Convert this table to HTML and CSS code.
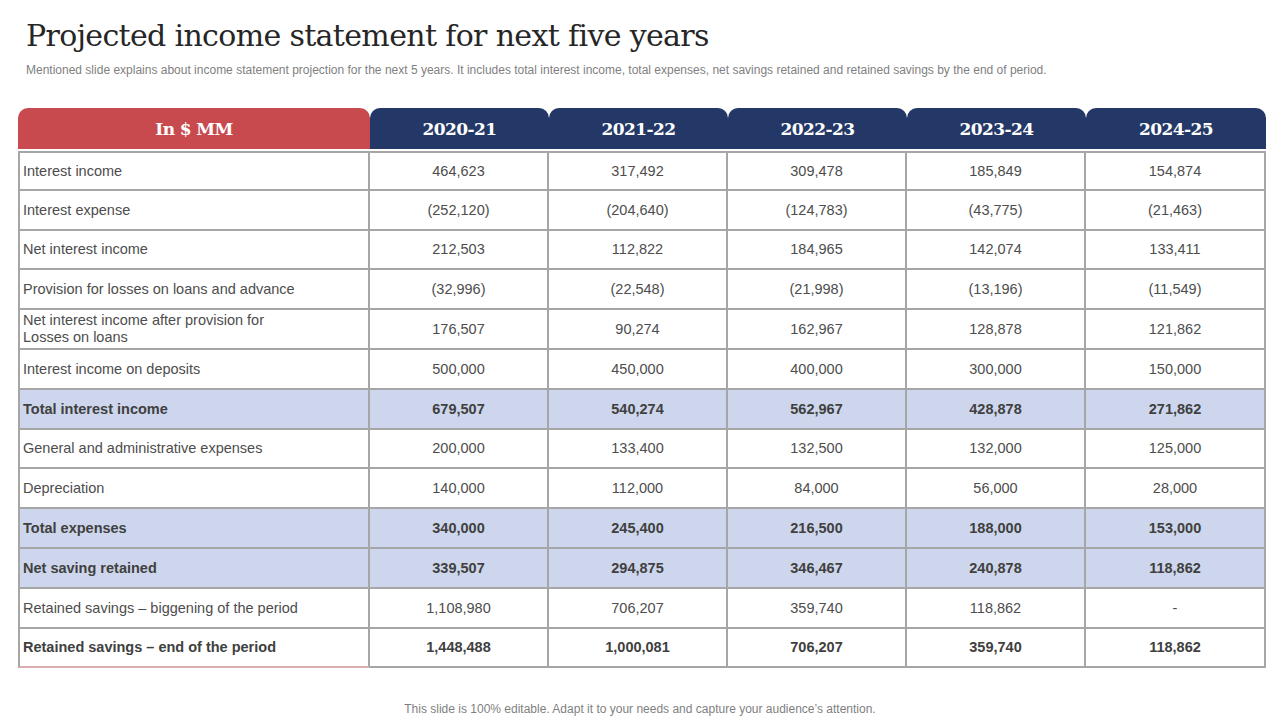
FILE: index.html
```html
<!DOCTYPE html>
<html>
<head>
<meta charset="utf-8">
<link rel="stylesheet" href="styles.css">
</head>
<body>
<div class="slide">
  <h1 class="title">Projected income statement for next five years</h1>
  <p class="subtitle">Mentioned slide explains about income statement projection for the next 5 years. It includes total interest income, total expenses, net savings retained and retained savings by the end of period.</p>
  <div class="table">
    <div class="hd hd-red">In $ MM</div>
    <div class="hd">2020-21</div>
    <div class="hd">2021-22</div>
    <div class="hd">2022-23</div>
    <div class="hd">2023-24</div>
    <div class="hd">2024-25</div>

    <div class="c lbl">Interest income</div><div class="c">464,623</div><div class="c">317,492</div><div class="c">309,478</div><div class="c">185,849</div><div class="c">154,874</div>
    <div class="c lbl">Interest expense</div><div class="c">(252,120)</div><div class="c">(204,640)</div><div class="c">(124,783)</div><div class="c">(43,775)</div><div class="c">(21,463)</div>
    <div class="c lbl">Net interest income</div><div class="c">212,503</div><div class="c">112,822</div><div class="c">184,965</div><div class="c">142,074</div><div class="c">133,411</div>
    <div class="c lbl">Provision for losses on loans and advance</div><div class="c">(32,996)</div><div class="c">(22,548)</div><div class="c">(21,998)</div><div class="c">(13,196)</div><div class="c">(11,549)</div>
    <div class="c lbl two">Net interest income after provision for<br>Losses on loans</div><div class="c">176,507</div><div class="c">90,274</div><div class="c">162,967</div><div class="c">128,878</div><div class="c">121,862</div>
    <div class="c lbl">Interest income on deposits</div><div class="c">500,000</div><div class="c">450,000</div><div class="c">400,000</div><div class="c">300,000</div><div class="c">150,000</div>
    <div class="c lbl hl">Total interest income</div><div class="c hl">679,507</div><div class="c hl">540,274</div><div class="c hl">562,967</div><div class="c hl">428,878</div><div class="c hl">271,862</div>
    <div class="c lbl">General and administrative expenses</div><div class="c">200,000</div><div class="c">133,400</div><div class="c">132,500</div><div class="c">132,000</div><div class="c">125,000</div>
    <div class="c lbl">Depreciation</div><div class="c">140,000</div><div class="c">112,000</div><div class="c">84,000</div><div class="c">56,000</div><div class="c">28,000</div>
    <div class="c lbl hl">Total expenses</div><div class="c hl">340,000</div><div class="c hl">245,400</div><div class="c hl">216,500</div><div class="c hl">188,000</div><div class="c hl">153,000</div>
    <div class="c lbl hl">Net saving retained</div><div class="c hl">339,507</div><div class="c hl">294,875</div><div class="c hl">346,467</div><div class="c hl">240,878</div><div class="c hl">118,862</div>
    <div class="c lbl">Retained savings – biggening of the period</div><div class="c">1,108,980</div><div class="c">706,207</div><div class="c">359,740</div><div class="c">118,862</div><div class="c">-</div>
    <div class="c lbl b last">Retained savings – end of the period</div><div class="c b">1,448,488</div><div class="c b">1,000,081</div><div class="c b">706,207</div><div class="c b">359,740</div><div class="c b">118,862</div>
  </div>
  <p class="footer">This slide is 100% editable. Adapt it to your needs and capture your audience’s attention.</p>
</div>
</body>
</html>
```
FILE: styles.css
```css
html, body {
  margin: 0;
  padding: 0;
  background: #ffffff;
}

.slide {
  width: 1280px;
  height: 720px;
  box-sizing: border-box;
  padding: 16px 0 0 18px;
  display: flex;
  flex-direction: column;
  font-family: "Liberation Sans", Arial, sans-serif;
}

.title {
  margin: 0 0 0 8px;
  font-family: "DejaVu Serif", serif;
  font-weight: normal;
  font-size: 30px;
  line-height: 40px;
  color: #262626;
  letter-spacing: -0.65px;
}

.subtitle {
  margin: 6px 0 0 8px;
  font-size: 12px;
  line-height: 16px;
  color: #7f7f7f;
}

.table {
  margin-top: 30px;
  width: 1248px;
  display: grid;
  grid-template-columns: 352px 179px 179px 179px 179px 180px;
  grid-template-rows: 43px;
  grid-auto-rows: 39.8px;
}

.hd {
  display: flex;
  align-items: center;
  justify-content: center;
  background: #243867;
  color: #ffffff;
  font-family: "DejaVu Serif", serif;
  font-weight: bold;
  font-size: 17px;
  letter-spacing: -0.6px;
  border-radius: 10px 10px 0 0;
  border-bottom: 2px solid #ffffff;
}

.hd-red {
  background: #c84a4f;
}

.c {
  display: flex;
  align-items: center;
  justify-content: center;
  font-size: 14.5px;
  color: #4d4d4d;
  border-right: 2px solid #a6a6a6;
  border-bottom: 2px solid #a6a6a6;
  box-sizing: border-box;
}

.table > .c:nth-child(-n+12) {
  border-top: 2px solid #a6a6a6;
}

.lbl {
  justify-content: flex-start;
  padding-left: 3px;
  border-left: 2px solid #a6a6a6;
}

.two {
  line-height: 17px;
}

.hl {
  background: #cdd6ec;
  font-weight: bold;
  color: #404040;
}

.b {
  font-weight: bold;
  color: #404040;
}

.last {
  border-bottom-color: #d9aeb1;
}

.footer {
  margin: auto 0 3px 0;
  width: 1244px;
  text-align: center;
  font-size: 12px;
  line-height: 16px;
  color: #7f7f7f;
}
```
